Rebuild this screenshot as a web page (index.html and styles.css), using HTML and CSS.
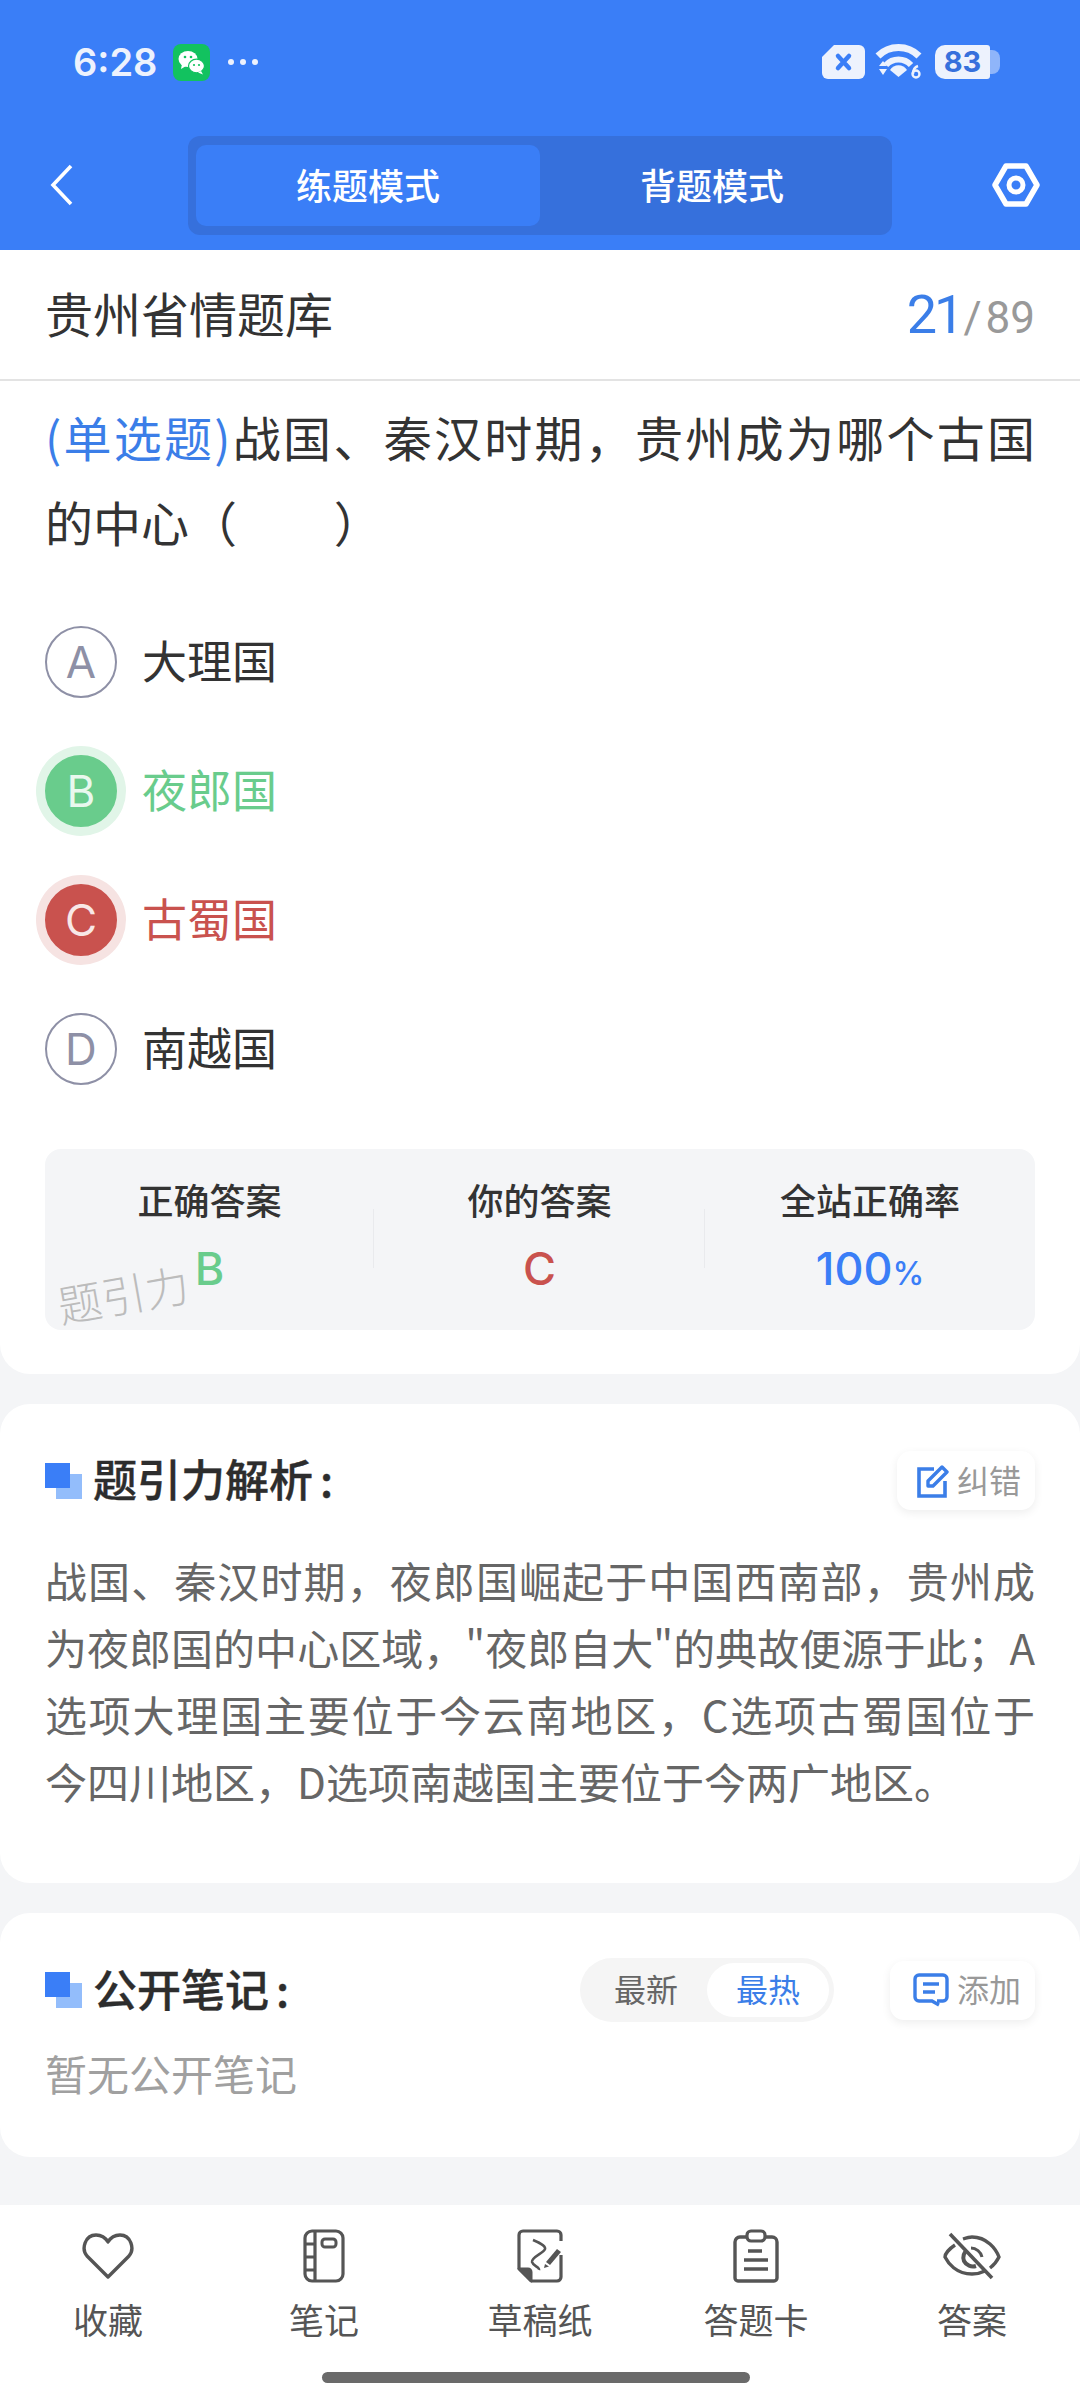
FILE: index.html
```html
<!DOCTYPE html>
<html lang="zh-CN">
<head>
    <meta charset="UTF-8">
    <meta name="viewport" content="width=device-width, initial-scale=1.0">
    <title>贵州省情题库</title>
    <link rel="stylesheet" href="styles.css">
</head>
<body>
    <header class="top">
        <div class="status">
            <div class="status-left">
                <span class="time">6:28</span>
                <svg class="wechat" width="37" height="37" viewBox="0 0 37 37">
                    <rect width="37" height="37" rx="8" fill="#12c25f"/>
                    <ellipse cx="15" cy="15" rx="9.5" ry="8" fill="#fff"/>
                    <path d="M9 20l-1 5 5-3z" fill="#fff"/>
                    <ellipse cx="23.5" cy="22" rx="8" ry="6.8" fill="#fff" stroke="#12c25f" stroke-width="1.2"/>
                    <path d="M28 27l2 3.5-5-2z" fill="#fff"/>
                    <circle cx="12" cy="13" r="1.3" fill="#12c25f"/>
                    <circle cx="18" cy="13" r="1.3" fill="#12c25f"/>
                    <circle cx="21" cy="21" r="1.1" fill="#12c25f"/>
                    <circle cx="26" cy="21" r="1.1" fill="#12c25f"/>
                </svg>
                <span class="dots"><i></i><i></i><i></i></span>
            </div>
            <div class="status-right">
                <svg width="43" height="34" viewBox="0 0 43 34">
                    <path d="M12 0h25a6 6 0 0 1 6 6v22a6 6 0 0 1-6 6H6a6 6 0 0 1-6-6V12z" fill="#edf2fd"/>
                    <path d="M16 11l11 12M27 11L16 23" stroke="#3a7ef7" stroke-width="4.5" stroke-linecap="round"/>
                </svg>
                <svg width="48" height="36" viewBox="0 0 48 36">
                    <path d="M3 12a29 29 0 0 1 41 0" fill="none" stroke="#edf2fd" stroke-width="7"/>
                    <path d="M11 21a17 17 0 0 1 25 0" fill="none" stroke="#edf2fd" stroke-width="6"/>
                    <path d="M15 26a10 10 0 0 1 17 0l-8.500 7z" fill="#edf2fd"/>
                    <path d="M4 22l4-5 4 5zM4 25h8l-4 6z" fill="#edf2fd"/>
                    <circle cx="41" cy="30" r="3.500" fill="none" stroke="#edf2fd" stroke-width="2.400"/>
                    <path d="M38 30c0-5 2-7 5-8" fill="none" stroke="#edf2fd" stroke-width="2.400"/>
                </svg>
                <div class="battery">
                    <span class="battery-body">83</span>
                    <span class="battery-cap"></span>
                </div>
            </div>
        </div>
        <nav class="nav">
            <svg class="back" width="24" height="42" viewBox="0 0 24 42">
                <path d="M21 2L3 21l18 19" fill="none" stroke="#fff" stroke-width="3.6"/>
            </svg>
            <div class="tabs">
                <div class="tab tab-on">练题模式</div>
                <div class="tab">背题模式</div>
            </div>
            <svg class="gear" width="48" height="44" viewBox="0 0 48 44">
                <path d="M14 3h20l11 19-11 19H14L3 22z" fill="none" stroke="#fff" stroke-width="5.5" stroke-linejoin="round"/>
                <circle cx="24" cy="22" r="7" fill="none" stroke="#fff" stroke-width="5"/>
            </svg>
        </nav>
    </header>

    <main>
        <section class="card card-first">
            <div class="bank">
                <span class="bank-name">贵州省情题库</span>
                <span class="count"><b>21</b><em>/</em><span>89</span></span>
            </div>
            <div class="question-wrap">
                <p class="question"><span class="q-type">(单选题)</span>战国、秦汉时期，贵州成为哪个古国的中心（&nbsp;&nbsp;&nbsp;&nbsp;&nbsp;&nbsp;&nbsp;&nbsp;&nbsp;）</p>
                <ul class="options">
                    <li class="option"><span class="letter">A</span><span class="option-text">大理国</span></li>
                    <li class="option option-right"><span class="letter">B</span><span class="option-text">夜郎国</span></li>
                    <li class="option option-wrong"><span class="letter">C</span><span class="option-text">古蜀国</span></li>
                    <li class="option"><span class="letter">D</span><span class="option-text">南越国</span></li>
                </ul>
                <div class="stats">
                    <div class="stat">
                        <div class="stat-label">正确答案</div>
                        <div class="stat-value right">B</div>
                    </div>
                    <div class="stat">
                        <div class="stat-label">你的答案</div>
                        <div class="stat-value wrong">C</div>
                    </div>
                    <div class="stat">
                        <div class="stat-label">全站正确率</div>
                        <div class="stat-value blue">100<small>%</small></div>
                    </div>
                    <span class="watermark">题引力</span>
                </div>
            </div>
        </section>

        <section class="card card-analysis">
            <div class="sec-head">
                <h2 class="sec-title"><span class="sec-mark"></span><span class="sec-text">题引力解析<i>:</i></span></h2>
                <div class="mini-btn">
                    <svg width="32" height="34" viewBox="0 0 32 34">
                        <path d="M17 5H2v27h26V17" fill="none" stroke="#3b7ee8" stroke-width="3.6"/>
                        <path d="M11 17L25 3l5 5-14 14h-5z" fill="none" stroke="#3b7ee8" stroke-width="3.4" stroke-linejoin="round"/>
                    </svg>
                    <span class="mini-text">纠错</span>
                </div>
            </div>
            <p class="analysis">战国、秦汉时期，夜郎国崛起于中国西南部，贵州成为夜郎国的中心区域，"夜郎自大"的典故便源于此；A选项大理国主要位于今云南地区，C选项古蜀国位于今四川地区，D选项南越国主要位于今两广地区。</p>
        </section>

        <section class="card card-notes">
            <div class="sec-head">
                <h2 class="sec-title"><span class="sec-mark"></span><span class="sec-text">公开笔记<i>:</i></span></h2>
                <div class="sec-tools">
                    <div class="toggle">
                        <span class="toggle-item">最新</span>
                        <span class="toggle-item toggle-on">最热</span>
                    </div>
                    <div class="mini-btn">
                        <svg width="36" height="34" viewBox="0 0 36 34">
                            <path d="M24 28h6a4 4 0 0 0 4-4V6a4 4 0 0 0-4-4H6a4 4 0 0 0-4 4v18a4 4 0 0 0 4 4h13l7 4" fill="none" stroke="#3b7ee8" stroke-width="3.4"/>
                            <path d="M10 11h16M10 19h12" fill="none" stroke="#3b7ee8" stroke-width="3.4"/>
                        </svg>
                        <span class="mini-text">添加</span>
                    </div>
                </div>
            </div>
            <p class="empty">暂无公开笔记</p>
        </section>
    </main>

    <footer class="bottom">
        <div class="bottom-items">
            <div class="bottom-item">
                <span class="bottom-icon">
                    <svg width="52" height="48" viewBox="0 0 52 48">
                        <path d="M26 45L5 24C-1 17 3 3 14 3c5 0 9 2 12 7 3-5 7-7 12-7 11 0 15 14 9 21z" fill="none" stroke="#555" stroke-width="3.4" stroke-linejoin="round"/>
                    </svg>
                </span>
                收藏
            </div>
            <div class="bottom-item">
                <span class="bottom-icon">
                    <svg width="42" height="54" viewBox="0 0 42 54">
                        <rect x="2" y="2" width="38" height="50" rx="7" fill="none" stroke="#555" stroke-width="3.2"/>
                        <path d="M12 2v50M2 15h10M2 28h10M2 41h10" fill="none" stroke="#555" stroke-width="3.2"/>
                        <rect x="19" y="10" width="14" height="8" rx="3" fill="none" stroke="#555" stroke-width="3"/>
                    </svg>
                </span>
                笔记
            </div>
            <div class="bottom-item">
                <span class="bottom-icon">
                    <svg width="46" height="54" viewBox="0 0 46 54">
                        <path d="M14 52h26a4 4 0 0 0 4-4V26M44 12V6a4 4 0 0 0-4-4H6a4 4 0 0 0-4 4v34" fill="none" stroke="#555" stroke-width="3.2"/>
                        <path d="M2 40h9a3 3 0 0 1 3 3v9z" fill="#555" stroke="#555" stroke-width="3" stroke-linejoin="round"/>
                        <path d="M16 11c5 2 13 6 12 9-1 4-14 8-13 13 1 4 8 5 7 8" fill="none" stroke="#555" stroke-width="2.6"/>
                        <path d="M29 33l11-13 4 3-11 13z" fill="#555"/>
                        <path d="M27 39l1-4 4 2.500z" fill="#555"/>
                    </svg>
                </span>
                草稿纸
            </div>
            <div class="bottom-item">
                <span class="bottom-icon">
                    <svg width="46" height="54" viewBox="0 0 46 54">
                        <path d="M14 8H7a5 5 0 0 0-5 5v36a3 3 0 0 0 3 3h36a3 3 0 0 0 3-3V13a5 5 0 0 0-5-5h-7" fill="none" stroke="#555" stroke-width="3.4"/>
                        <rect x="14" y="2" width="18" height="10" rx="4" fill="none" stroke="#555" stroke-width="3.2"/>
                        <path d="M15 22h14M11 31h24M11 40h24" fill="none" stroke="#555" stroke-width="3.4"/>
                    </svg>
                </span>
                答题卡
            </div>
            <div class="bottom-item">
                <span class="bottom-icon">
                    <svg width="58" height="48" viewBox="0 0 58 48">
                        <path d="M12 13C6 17 2 22 2 25c3 6 11 17 27 17 5 0 9-1 13-3M20 7c3-1 6-2 9-2 15 0 24 12 27 20-2 4-5 8-9 11" fill="none" stroke="#555" stroke-width="3.4"/>
                        <path d="M24 18a10 10 0 0 0-3 11 10 10 0 0 0 12 5" fill="none" stroke="#555" stroke-width="4"/>
                        <path d="M28 16c5 0 10 4 11 9" fill="none" stroke="#555" stroke-width="3"/>
                        <path d="M7 2l42 44" fill="none" stroke="#555" stroke-width="3.6"/>
                    </svg>
                </span>
                答案
            </div>
        </div>
        <div class="home-bar"></div>
    </footer>
</body>
</html>
```

FILE: styles.css
```css
*{
    box-sizing: border-box;
    margin: 0;
    padding: 0;
}
body{
    width: 1080px;
    height: 2400px;
    overflow: hidden;
    background-color: #f4f5f7;
    color: #333;
    font-family: "Noto Sans CJK SC", "Noto Sans", sans-serif;
}
ul{
    list-style: none;
}

/* top blue part */
.top{
    height: 250px;
    background-color: #3a7ef7;
}
.status{
    height: 124px;
    padding: 0 80px 0 73px;
    display: flex;
    justify-content: space-between;
    align-items: center;
}
.status-left, .status-right{
    display: flex;
    align-items: center;
}
.time{
    width: 100px;
    font-family: Inter, sans-serif;
    font-size: 38px;
    font-weight: 600;
    color: #edf2fd;
}
.dots{
    display: flex;
    gap: 6px;
    margin-left: 18px;
}
.dots i{
    width: 6px;
    height: 6px;
    border-radius: 50%;
    background-color: #edf2fd;
}
.status-right{
    gap: 10px;
}
.battery{
    margin-left: 2px;
    display: flex;
    align-items: center;
}
.battery-body{
    width: 55px;
    height: 34px;
    border-radius: 10px 3px 3px 10px;
    background-color: #edf2fd;
    text-align: center;
    font-family: Inter, sans-serif;
    font-size: 29px;
    line-height: 34px;
    font-weight: 700;
    color: #3670dc;
}
.battery-cap{
    width: 10px;
    height: 24px;
    border-radius: 0 8px 8px 0;
    background-color: #8fb5fa;
}
.nav{
    margin-top: 12px;
    padding: 0 40px 0 50px;
    display: flex;
    align-items: center;
}
.back{
    margin: -2px 114px 0 0;
}
.tabs{
    width: 704px;
    height: 99px;
    padding: 9px 8px;
    display: flex;
    background-color: #3670dc;
    border-radius: 12px;
}
.tab{
    width: 344px;
    border-radius: 10px;
    font-size: 36px;
    line-height: 79px;
    font-weight: 500;
    text-align: center;
    color: #fff;
}
.tab-on{
    background-color: #3a7ef7;
}
.gear{
    margin: -2px 0 0 100px;
}

/* white cards */
.card{
    background-color: #fff;
    border-radius: 30px;
    margin-bottom: 30px;
}
.card-first{
    height: 1124px;
    border-radius: 0 0 30px 30px;
}
.bank{
    height: 131px;
    padding: 0 45px;
    display: flex;
    justify-content: space-between;
    align-items: center;
    border-bottom: 2px solid #e3e3e3;
}
.bank-name{
    font-size: 48px;
    padding-bottom: 5px;
    color: #333;
}
.count{
    font-family: Roboto, sans-serif;
    font-size: 44px;
    color: #999;
}
.count b{
    font-size: 54px;
    font-weight: 400;
    color: #3b7ee8;
    letter-spacing: -3px;
}
.count em{
    font-style: normal;
    margin: 0 4px 0 2px;
}
.question-wrap{
    padding: 13px 45px 0;
}
.question{
    font-size: 48px;
    line-height: 85px;
    text-align: justify;
}
.q-type{
    color: #3b7ee8;
}
.options{
    margin-top: 62px;
    display: flex;
    flex-direction: column;
    gap: 57px;
}
.option{
    display: flex;
    align-items: center;
    height: 72px;
    font-size: 45px;
    color: #333;
}
.option-text{
    padding-bottom: 5px;
}
.letter{
    width: 72px;
    height: 72px;
    margin-right: 25px;
    border: 2px solid #8e90a6;
    border-radius: 50%;
    display: flex;
    justify-content: center;
    align-items: center;
    font-family: Inter, sans-serif;
    font-size: 44px;
    color: #8e90a6;
}
.option-right{
    color: #69cc8c;
}
.option-right .letter{
    background-color: #69cc8c;
    border-color: #69cc8c;
    color: #e9f8ee;
    box-shadow: 0 0 0 9px #e1f5e8;
}
.option-wrong{
    color: #c9524e;
}
.option-wrong .letter{
    background-color: #c9524e;
    border-color: #c9524e;
    color: #f8e8e7;
    box-shadow: 0 0 0 9px #f6e3e2;
}
.stats{
    position: relative;
    margin-top: 64px;
    height: 181px;
    padding-top: 27px;
    display: grid;
    grid-template-columns: 329px 331px 330px;
    background-color: #f4f5f7;
    border-radius: 16px;
}
.stat{
    text-align: center;
    height: 100px;
    background: linear-gradient(#e9eaed, #e9eaed) right 33px / 1px 59px no-repeat;
}
.stat:nth-child(3){
    background: none;
}
.stat-label{
    font-size: 36px;
    line-height: 46px;
    font-weight: 500;
    color: #333;
}
.stat-value{
    margin-top: 22px;
    font-family: Inter, sans-serif;
    font-size: 45px;
    line-height: 50px;
    font-weight: 500;
}
.stat-value small{
    font-size: 32px;
}
.right{
    color: #69cc8c;
}
.wrong{
    color: #c9524e;
}
.blue{
    color: #3a7ef7;
}
.watermark{
    position: absolute;
    left: 12px;
    top: 115px;
    font-size: 44px;
    line-height: 58px;
    font-weight: 300;
    color: #bcbcbc;
    transform: rotate(-10deg);
}

.card-analysis{
    height: 479px;
    padding: 45px 45px 0;
}
.card-notes{
    height: 244px;
    padding: 45px 45px 0;
    margin-bottom: 48px;
}
.card-notes .mini-btn{
    padding-left: 23px;
}
.sec-head{
    display: flex;
    justify-content: space-between;
    align-items: center;
}
.sec-title{
    display: flex;
    align-items: center;
    font-size: 44px;
    line-height: 58px;
    font-weight: 500;
    -webkit-text-stroke: 0.4px #2d2d2d;
    color: #2d2d2d;
}
.sec-text{
    padding-bottom: 5px;
}
.sec-text i{
    font-style: normal;
    margin-left: 7px;
}
.sec-mark{
    position: relative;
    width: 37px;
    height: 36px;
    margin-right: 11px;
    background: linear-gradient(#93bdfb, #93bdfb) 11px 11px / 26px 25px no-repeat;
}
.sec-mark::before{
    content: "";
    position: absolute;
    left: 0;
    top: 0;
    width: 25px;
    height: 25px;
    background-color: #3a7ef7;
}
.mini-btn{
    height: 59px;
    padding: 0 14px 0 20px;
    display: flex;
    align-items: center;
    gap: 8px;
    font-size: 32px;
    color: #999;
    background-color: #fff;
    border-radius: 14px;
    box-shadow: 0 3px 10px rgba(0, 0, 0, 0.07);
}
.mini-text{
    padding-bottom: 4px;
}
.analysis{
    margin-top: 34px;
    font-size: 42px;
    line-height: 67px;
    text-align: justify;
    color: #666;
}
.sec-tools{
    display: flex;
    align-items: center;
    gap: 56px;
}
.toggle{
    width: 254px;
    height: 64px;
    padding: 5px;
    display: flex;
    justify-content: space-between;
    background-color: #f5f5f5;
    border-radius: 32px;
}
.toggle-item{
    width: 122px;
    border-radius: 27px;
    text-align: center;
    font-size: 32px;
    line-height: 50px;
    color: #666;
}
.toggle-on{
    background-color: #fff;
    color: #3b7ee8;
}
.empty{
    margin-top: 21px;
    font-size: 42px;
    line-height: 60px;
    color: #a0a0a0;
}

/* bottom bar */
.bottom{
    height: 195px;
    background-color: #fff;
    padding-top: 23px;
}
.bottom-items{
    display: grid;
    grid-template-columns: repeat(5, 216px);
}
.bottom-item{
    display: flex;
    flex-direction: column;
    align-items: center;
    font-size: 35px;
    line-height: 44px;
    color: #555;
}
.bottom-icon{
    height: 56px;
    margin-bottom: 13px;
    display: flex;
    align-items: center;
}
.home-bar{
    width: 428px;
    height: 11px;
    margin: 31px 0 0 322px;
    border-radius: 6px;
    background-color: #6a6a6a;
}
```
